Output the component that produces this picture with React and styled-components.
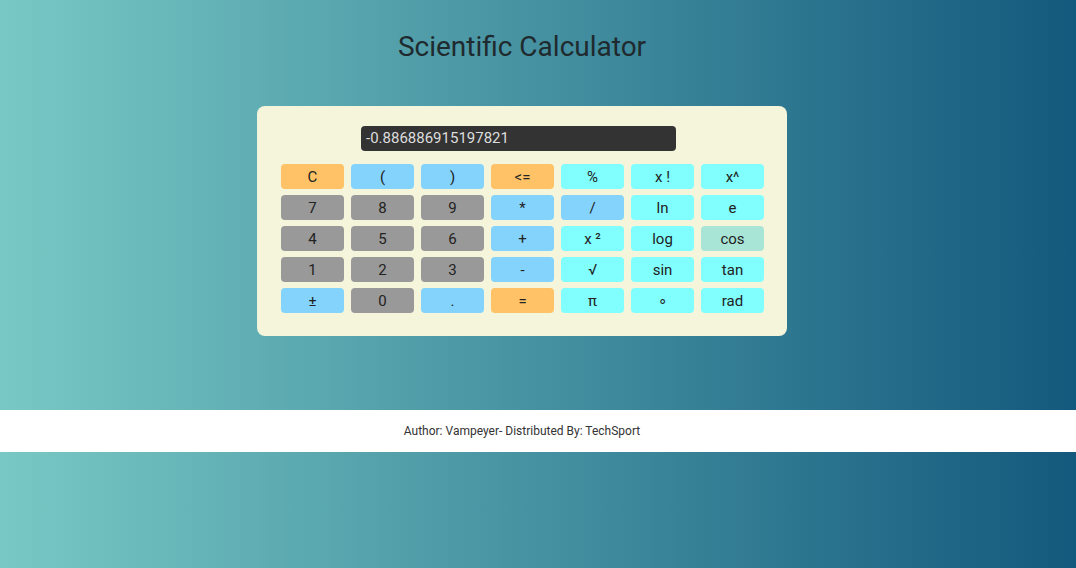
import React from 'react'
import styled, { createGlobalStyle } from 'styled-components'

const GlobalStyle = createGlobalStyle`
  html, body {
    margin: 0;
    padding: 0;
  }
  body {
    min-height: 100vh;
    font-family: Roboto, "Liberation Sans", Arial, sans-serif;
    background: linear-gradient(to right, #78c9c5, #13597d);
  }
`

const colors = {
  orange: '#ffc266',
  blue: '#83d3fd',
  gray: '#999999',
  cyan: '#80fffe',
  mint: '#a9e5d6',
}

const keys = [
  ['C', 'orange'], ['(', 'blue'], [')', 'blue'], ['<=', 'orange'], ['%', 'cyan'], ['x !', 'cyan'], ['x^', 'cyan'],
  ['7', 'gray'], ['8', 'gray'], ['9', 'gray'], ['*', 'blue'], ['/', 'blue'], ['ln', 'cyan'], ['e', 'cyan'],
  ['4', 'gray'], ['5', 'gray'], ['6', 'gray'], ['+', 'blue'], ['x ²', 'cyan'], ['log', 'cyan'], ['cos', 'mint'],
  ['1', 'gray'], ['2', 'gray'], ['3', 'gray'], ['-', 'blue'], ['√', 'cyan'], ['sin', 'cyan'], ['tan', 'cyan'],
  ['±', 'blue'], ['0', 'gray'], ['.', 'blue'], ['=', 'orange'], ['π', 'cyan'], ['∘', 'cyan'], ['rad', 'cyan'],
]

const App = () => {
  return (
    <>
      <GlobalStyle />
      <Main>
        <Title>Scientific Calculator</Title>
        <Card>
          <Display>-0.886886915197821</Display>
          <Keypad>
            {keys.map(([label, tone], i) => (
              <Key key={i} $tone={tone}>{label}</Key>
            ))}
          </Keypad>
        </Card>
      </Main>
      <Footer>
        <span>Author: Vampeyer- Distributed By: TechSport</span>
      </Footer>
    </>
  )
}

const Main = styled.main`
  display: flex;
  flex-direction: column;
  align-items: center;
  padding-right: 32px;
  padding-top: 30px;
  padding-bottom: 74px;
`

const Title = styled.h1`
  margin: 0;
  font-size: 28px;
  line-height: 33px;
  font-weight: 400;
  color: #1f2a2e;
`

const Card = styled.div`
  margin-top: 43px;
  width: 530px;
  box-sizing: border-box;
  padding: 20px 23px 23px 24px;
  background: #f5f5dc;
  border-radius: 8px;
`

const Display = styled.div`
  margin-left: 80px;
  width: 315px;
  height: 25px;
  box-sizing: border-box;
  padding-left: 5px;
  background: #333333;
  color: #dddddd;
  border-radius: 4px;
  font-size: 15px;
  line-height: 25px;
`

const Keypad = styled.div`
  margin-top: 13px;
  display: grid;
  grid-template-columns: repeat(7, 63px);
  grid-auto-rows: 25px;
  column-gap: 7px;
  row-gap: 6px;
`

const Key = styled.div`
  display: flex;
  align-items: center;
  justify-content: center;
  padding-top: 1px;
  box-sizing: border-box;
  background: ${({ $tone }) => colors[$tone]};
  border-radius: 4px;
  color: #222;
  font-size: 15px;
`

const Footer = styled.footer`
  background: #fff;
  height: 42px;
  display: flex;
  align-items: center;
  justify-content: center;
  padding-right: 32px;
  font-size: 12px;
  color: #333;
`

export default App
